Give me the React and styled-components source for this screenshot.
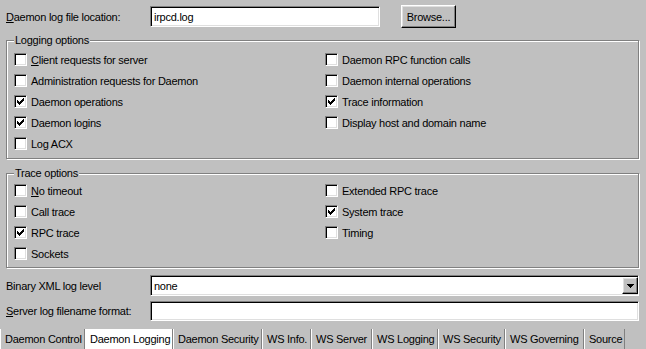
import React from 'react';
import styled, { createGlobalStyle } from 'styled-components';

const Global = createGlobalStyle`
  html, body { margin: 0; padding: 0; background: #c0c0c0; }
  body { font-family: "Liberation Sans", Arial, sans-serif; font-size: 11px; color: #000; }
`;

const Window = styled.div`
  width: 646px;
  height: 349px;
  background: #c0c0c0;
  display: flex;
  flex-direction: column;
  overflow: hidden;
  font-family: "Liberation Sans", Arial, sans-serif;
  font-size: 11px;
  letter-spacing: -0.25px;
  color: #000;
`;

const TopRow = styled.div`
  display: flex;
  align-items: center;
  height: 23px;
  margin: 5px 0 0 6px;
`;

const FormRow = styled.div`
  display: flex;
  align-items: center;
  height: ${p => p.$h}px;
  margin: ${p => p.$mt}px 7px 0 6px;
`;

const FieldLabel = styled.span`
  width: ${p => p.$w}px;
  flex: none;
  white-space: nowrap;
`;

const Sunken = styled.div`
  box-sizing: border-box;
  ${p => (p.$w ? `width: ${p.$w}px; flex: none;` : 'flex: 1;')}
  height: ${p => p.$h}px;
  background: #fff;
  border: 1px solid;
  border-color: #808080 #fff #fff #808080;
  box-shadow: inset 1px 1px 0 #000, inset -1px -1px 0 #dfdfdf;
  display: flex;
  align-items: center;
  padding-left: 3px;
  white-space: nowrap;
`;

const Value = styled.span`
  flex: 1;
`;

const RaisedButton = styled.button`
  box-sizing: border-box;
  width: ${p => p.$w}px;
  height: ${p => p.$h}px;
  margin-left: ${p => p.$ml || 0}px;
  padding: 0;
  background: #c0c0c0;
  border: 1px solid;
  border-color: #fff #000 #000 #fff;
  box-shadow: inset -1px -1px 0 #808080, inset 1px 1px 0 #dfdfdf;
  font: inherit;
  letter-spacing: inherit;
  color: #000;
  display: flex;
  align-items: center;
  justify-content: center;
  flex: none;
`;

const Group = styled.div`
  position: relative;
  margin: ${p => p.$mt}px 7px 0 6px;
  border: 1px solid #808080;
  box-shadow: inset 1px 1px 0 #fff, 1px 1px 0 #fff;
  padding: ${p => p.$pt}px 0 ${p => p.$pb}px 7px;
  display: flex;
`;

const Legend = styled.span`
  position: absolute;
  top: -7px;
  left: 7px;
  padding: 0 1px;
  line-height: 13px;
  background: #c0c0c0;
  white-space: nowrap;
`;

const Column = styled.div`
  width: ${p => p.$w}px;
  display: flex;
  flex-direction: column;
`;

const CheckRow = styled.label`
  height: 21px;
  display: flex;
  align-items: center;
  gap: 4px;
  white-space: nowrap;
`;

const Box = styled.span`
  box-sizing: border-box;
  width: 13px;
  height: 13px;
  flex: none;
  background: #fff;
  border: 1px solid;
  border-color: #808080 #fff #fff #808080;
  box-shadow: inset 1px 1px 0 #000, inset -1px -1px 0 #dfdfdf;
  display: block;
  svg { display: block; }
`;

const TabStrip = styled.div`
  margin-top: auto;
  height: 20px;
  display: flex;
`;

const Tab = styled.div`
  box-sizing: border-box;
  width: ${p => p.$w}px;
  flex: none;
  height: 20px;
  padding-left: 4px;
  display: flex;
  align-items: center;
  white-space: nowrap;
  background: ${p => (p.$active ? '#fff' : '#c0c0c0')};
  border-left: 1px solid #fff;
  border-right: 1px solid #808080;
`;

const CHECK_TOPS = [4, 5, 6, 5, 4, 3, 2];

function Checkbox({ checked, children }) {
  return (
    <CheckRow>
      <Box>
        {checked && (
          <svg width="11" height="11" viewBox="0 0 11 11" shapeRendering="crispEdges">
            {CHECK_TOPS.map((t, i) => (
              <rect key={i} x={2 + i} y={t} width="1" height="3" fill="#000" />
            ))}
          </svg>
        )}
      </Box>
      <span>{children}</span>
    </CheckRow>
  );
}

const tabs = [
  ['Daemon Control', 85],
  ['Daemon Logging', 88, true],
  ['Daemon Security', 89],
  ['WS Info.', 49],
  ['WS Server', 61],
  ['WS Logging', 66],
  ['WS Security', 67],
  ['WS Governing', 79],
  ['Source', 41],
];

export default function App() {
  return (
    <>
      <Global />
      <Window>
        <TopRow>
          <FieldLabel $w={144}><u>D</u>aemon log file location:</FieldLabel>
          <Sunken $w={230} $h={21}>irpcd.log</Sunken>
          <RaisedButton $w={55} $h={23} $ml={21}>Browse...</RaisedButton>
        </TopRow>

        <Group $mt={12} $pt={8} $pb={4}>
          <Legend>Logging options</Legend>
          <Column $w={311}>
            <Checkbox><u>C</u>lient requests for server</Checkbox>
            <Checkbox>Administration requests for Daemon</Checkbox>
            <Checkbox checked>Daemon operations</Checkbox>
            <Checkbox checked>Daemon logins</Checkbox>
            <Checkbox>Log ACX</Checkbox>
          </Column>
          <Column $w={300}>
            <Checkbox>Daemon RPC function calls</Checkbox>
            <Checkbox>Daemon internal operations</Checkbox>
            <Checkbox checked>Trace information</Checkbox>
            <Checkbox>Display host and domain name</Checkbox>
          </Column>
        </Group>

        <Group $mt={14} $pt={6} $pb={3}>
          <Legend>Trace options</Legend>
          <Column $w={311}>
            <Checkbox><u>N</u>o timeout</Checkbox>
            <Checkbox>Call trace</Checkbox>
            <Checkbox checked>RPC trace</Checkbox>
            <Checkbox>Sockets</Checkbox>
          </Column>
          <Column $w={300}>
            <Checkbox>Extended RPC trace</Checkbox>
            <Checkbox checked>System trace</Checkbox>
            <Checkbox>Timing</Checkbox>
          </Column>
        </Group>

        <FormRow $mt={7} $h={21}>
          <FieldLabel $w={144}>Binary XML log level</FieldLabel>
          <Sunken $h={21}>
            <Value>none</Value>
            <RaisedButton $w={16} $h={17}>
              <svg width="7" height="4" viewBox="0 0 7 4" shapeRendering="crispEdges">
                <polygon points="0,0 7,0 3.5,4" fill="#000" />
              </svg>
            </RaisedButton>
          </Sunken>
        </FormRow>

        <FormRow $mt={5} $h={20}>
          <FieldLabel $w={144}><u>S</u>erver log filename format:</FieldLabel>
          <Sunken $h={20} />
        </FormRow>

        <TabStrip>
          {tabs.map(([label, w, active]) => (
            <Tab key={label} $w={w} $active={active}>{label}</Tab>
          ))}
        </TabStrip>
      </Window>
    </>
  );
}
